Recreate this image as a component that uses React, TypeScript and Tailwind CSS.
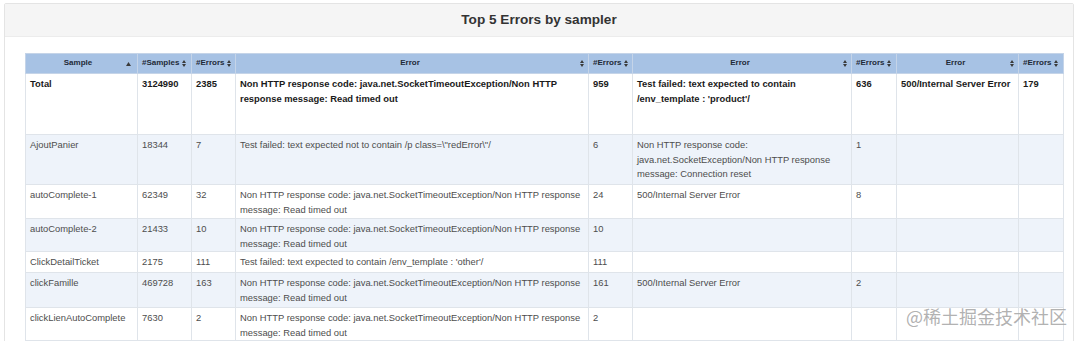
import React from "react";

const SortBoth = () => (
  <svg width="4" height="7" viewBox="0 0 4 7" className="shrink-0">
    <path d="M0 3 L2 0 L4 3 Z" fill="#3a3a3a" />
    <path d="M0 4 L2 7 L4 4 Z" fill="#3a3a3a" />
  </svg>
);

const SortUp = () => (
  <svg width="5" height="4" viewBox="0 0 5 4" className="shrink-0">
    <path d="M0 4 L2.5 0 L5 4 Z" fill="#3a3a3a" />
  </svg>
);

type Row = {
  name: string;
  samples: string;
  e1: string;
  err1: string[];
  n1: string;
  err2: string[];
  n2: string;
  err3: string[];
  n3: string;
  h: string;
  bold?: boolean;
  stripe?: boolean;
};

const rows: Row[] = [
  {
    name: "Total",
    samples: "3124990",
    e1: "2385",
    err1: ["Non HTTP response code: java.net.SocketTimeoutException/Non HTTP", "response message: Read timed out"],
    n1: "959",
    err2: ["Test failed: text expected to contain", "/env_template : 'product'/"],
    n2: "636",
    err3: ["500/Internal Server Error"],
    n3: "179",
    h: "h-[61px]",
    bold: true,
  },
  {
    name: "AjoutPanier",
    samples: "18344",
    e1: "7",
    err1: ["Test failed: text expected not to contain /p class=\\\"redError\\\"/"],
    n1: "6",
    err2: ["Non HTTP response code:", "java.net.SocketException/Non HTTP response", "message: Connection reset"],
    n2: "1",
    err3: [],
    n3: "",
    h: "h-[50px]",
    stripe: true,
  },
  {
    name: "autoComplete-1",
    samples: "62349",
    e1: "32",
    err1: ["Non HTTP response code: java.net.SocketTimeoutException/Non HTTP response", "message: Read timed out"],
    n1: "24",
    err2: ["500/Internal Server Error"],
    n2: "8",
    err3: [],
    n3: "",
    h: "h-[34px]",
  },
  {
    name: "autoComplete-2",
    samples: "21433",
    e1: "10",
    err1: ["Non HTTP response code: java.net.SocketTimeoutException/Non HTTP response", "message: Read timed out"],
    n1: "10",
    err2: [],
    n2: "",
    err3: [],
    n3: "",
    h: "h-[32px]",
    stripe: true,
  },
  {
    name: "ClickDetailTicket",
    samples: "2175",
    e1: "111",
    err1: ["Test failed: text expected to contain /env_template : 'other'/"],
    n1: "111",
    err2: [],
    n2: "",
    err3: [],
    n3: "",
    h: "h-[21px]",
  },
  {
    name: "clickFamille",
    samples: "469728",
    e1: "163",
    err1: ["Non HTTP response code: java.net.SocketTimeoutException/Non HTTP response", "message: Read timed out"],
    n1: "161",
    err2: ["500/Internal Server Error"],
    n2: "2",
    err3: [],
    n3: "",
    h: "h-[35px]",
    stripe: true,
  },
  {
    name: "clickLienAutoComplete",
    samples: "7630",
    e1: "2",
    err1: ["Non HTTP response code: java.net.SocketTimeoutException/Non HTTP response", "message: Read timed out"],
    n1: "2",
    err2: [],
    n2: "",
    err3: [],
    n3: "",
    h: "h-[33px]",
  },
];

const Lines = ({ lines }: { lines: string[] }) => (
  <>
    {lines.map((l, i) => (
      <div key={i} className="whitespace-nowrap">
        {l}
      </div>
    ))}
  </>
);

const td = "border border-[#dfe4ea] align-top px-[4px] pt-[3px] pb-0";

export default function App() {
  return (
    <div className="w-[1080px] h-[341px] bg-white pt-[3px] pl-[4px] relative overflow-hidden font-['Liberation_Sans',Arial,sans-serif]">
      <div className="w-[1070px] h-[345px] border border-[#e4e4e4] rounded-[2px]">
        <div className="h-[33px] bg-[#f5f5f5] border-b border-[#ececec] flex items-center justify-center">
          <span className="text-[13.6px] font-bold text-[#333]">Top 5 Errors by sampler</span>
        </div>
        <div className="pt-[16px] pl-[20px]">
          <table className="table-fixed border-collapse w-[1038px] text-[9.4px] leading-[14.5px]">
            <colgroup>
              <col className="w-[112px]" />
              <col className="w-[54px]" />
              <col className="w-[44px]" />
              <col className="w-[353px]" />
              <col className="w-[44px]" />
              <col className="w-[219px]" />
              <col className="w-[45px]" />
              <col className="w-[122px]" />
              <col className="w-[45px]" />
            </colgroup>
            <thead>
              <tr className="h-[20px] bg-[#a7c2e4] text-[8px] font-bold text-[#1f2a38]">
                <th className="border border-[#c5d4e8] px-[4px] py-0">
                  <div className="flex items-center">
                    <span className="flex-1 text-center">Sample</span>
                    <span className="pr-[2px]"><SortUp /></span>
                  </div>
                </th>
                <th className="border border-[#c5d4e8] px-[4px] py-0">
                  <div className="flex items-center gap-[3px]">
                    <span>#Samples</span>
                    <SortBoth />
                  </div>
                </th>
                <th className="border border-[#c5d4e8] px-[4px] py-0">
                  <div className="flex items-center gap-[3px]">
                    <span>#Errors</span>
                    <SortBoth />
                  </div>
                </th>
                <th className="border border-[#c5d4e8] px-[4px] py-0">
                  <div className="flex items-center">
                    <span className="flex-1 text-center">Error</span>
                    <SortBoth />
                  </div>
                </th>
                <th className="border border-[#c5d4e8] px-[4px] py-0">
                  <div className="flex items-center gap-[3px]">
                    <span>#Errors</span>
                    <SortBoth />
                  </div>
                </th>
                <th className="border border-[#c5d4e8] px-[4px] py-0">
                  <div className="flex items-center">
                    <span className="flex-1 text-center">Error</span>
                    <SortBoth />
                  </div>
                </th>
                <th className="border border-[#c5d4e8] px-[4px] py-0">
                  <div className="flex items-center gap-[3px]">
                    <span>#Errors</span>
                    <SortBoth />
                  </div>
                </th>
                <th className="border border-[#c5d4e8] px-[4px] py-0">
                  <div className="flex items-center">
                    <span className="flex-1 text-center">Error</span>
                    <SortBoth />
                  </div>
                </th>
                <th className="border border-[#c5d4e8] px-[4px] py-0">
                  <div className="flex items-center gap-[3px]">
                    <span>#Errors</span>
                    <SortBoth />
                  </div>
                </th>
              </tr>
            </thead>
            <tbody>
              {rows.map((r) => (
                <tr
                  key={r.name}
                  className={`${r.h} ${r.stripe ? "bg-[#eef3fa]" : "bg-white"} ${
                    r.bold ? "font-bold text-[#1a1a1a]" : "text-[#4d4d4d]"
                  }`}
                >
                  <td className={td}>{r.name}</td>
                  <td className={td}>{r.samples}</td>
                  <td className={td}>{r.e1}</td>
                  <td className={td}><Lines lines={r.err1} /></td>
                  <td className={td}>{r.n1}</td>
                  <td className={td}><Lines lines={r.err2} /></td>
                  <td className={td}>{r.n2}</td>
                  <td className={td}><Lines lines={r.err3} /></td>
                  <td className={td}>{r.n3}</td>
                </tr>
              ))}
            </tbody>
          </table>
        </div>
      </div>
      <div className="absolute left-[906px] top-[305px] text-[18px] leading-[22px] text-[#a8a8a8]/90 font-['Noto_Sans_CJK_SC',sans-serif] whitespace-nowrap">
        @稀土掘金技术社区
      </div>
    </div>
  );
}
